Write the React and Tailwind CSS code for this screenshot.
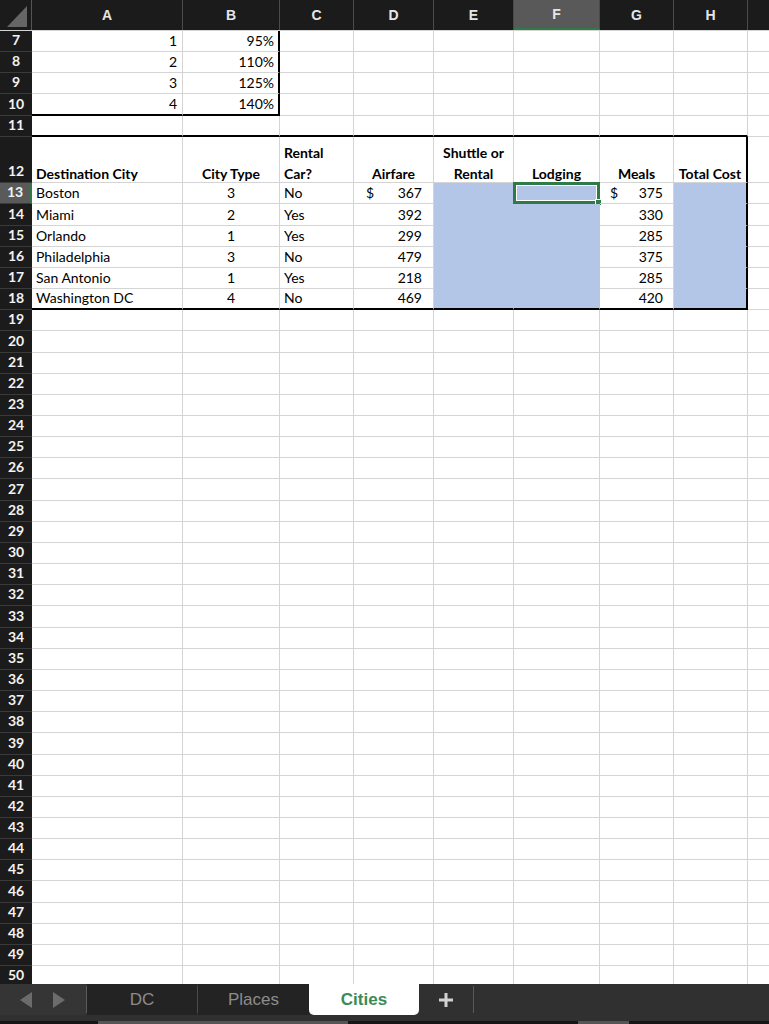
import React from 'react'

const W = ['w-[151px]', 'w-[97px]', 'w-[74px]', 'w-[80px]', 'w-[80px]', 'w-[86px]', 'w-[74px]', 'w-[74px]']
const LETTERS = ['A', 'B', 'C', 'D', 'E', 'F', 'G', 'H']

const RB = {
  g: 'border-r border-r-[#d4d4d4]',
  k: 'border-r-2 border-r-black',
  b: 'border-r border-r-[#b4c6e7]',
}
const BB = {
  g: 'border-b border-b-[#d4d4d4]',
  k: 'border-b-2 border-b-black',
  b: 'border-b border-b-[#b4c6e7]',
}
const AL = {
  l: 'justify-start pl-[4px]',
  r: 'justify-end pr-[4px]',
  c: 'justify-center',
}

const BLUE = 'bg-[#b4c6e7]'

const CITIES = [
  ['Boston', 3, 'No', 367, 375],
  ['Miami', 2, 'Yes', 392, 330],
  ['Orlando', 1, 'Yes', 299, 285],
  ['Philadelphia', 3, 'No', 479, 375],
  ['San Antonio', 1, 'Yes', 218, 285],
  ['Washington DC', 4, 'No', 469, 420],
]

const TIERS = [
  [1, '95%'],
  [2, '110%'],
  [3, '125%'],
  [4, '140%'],
]

function Cell({ i, r = 'g', b = 'g', a = 'l', bg = '', extra = '', children }) {
  return (
    <div className={`${W[i]} shrink-0 relative flex items-end ${RB[r]} ${BB[b]} ${AL[a]} ${bg} ${extra}`}>
      {children}
    </div>
  )
}

function RowHead({ n, sel }) {
  return (
    <div
      className={`w-[32px] shrink-0 flex items-end justify-center pb-[1px] border-b border-b-[#3a3a3a] font-bold text-[#f2f2f2] ${
        sel ? 'bg-[#5a5a5a] border-r-2 border-r-[#2f7a47]' : 'bg-[#1b1b1b]'
      }`}
    >
      {n}
    </div>
  )
}

function Row({ n, h = 'h-[21.16px]', sel, children }) {
  return (
    <div className={`flex ${h}`}>
      <RowHead n={n} sel={sel} />
      {children}
      <div className="flex-1 border-b border-b-[#d4d4d4]" />
    </div>
  )
}

function Blank({ n }) {
  return (
    <Row n={n}>
      {W.map((_, i) => <Cell key={i} i={i} />)}
    </Row>
  )
}

// accounting format: $ sign left, figure right
function Money({ v, dollar, pad }) {
  return (
    <div className={`flex-1 flex justify-between ${pad}`}>
      <span>{dollar ? '$' : ''}</span>
      <span>{v}</span>
    </div>
  )
}

function Selection() {
  return (
    <div className="absolute -left-[1px] -top-[1px] -right-[1px] -bottom-[1px] border-[3px] border-[#2f7a47] shadow-[inset_0_0_0_1px_#ffffff]">
      <div className="absolute -right-[5px] -bottom-[5px] w-[7px] h-[7px] bg-[#2f7a47] border border-white" />
    </div>
  )
}

function TabBar() {
  return (
    <div className="h-[40px] shrink-0 flex flex-col bg-[#303030] font-['Liberation_Sans',Arial,sans-serif]">
      <div className="flex h-[31px]">
        <div className="w-[86px] flex items-center bg-[#353535]">
          <svg width="86" height="31" viewBox="0 0 86 31">
            <polygon points="32,8 32,24 20,16" fill="#6c6c6c" />
            <polygon points="53,8 53,24 65,16" fill="#6c6c6c" />
          </svg>
        </div>
        <div className="w-[1px] my-[2px] bg-[#5a5a5a]" />
        <div className="w-[110px] flex items-center justify-center bg-[#232323] text-[17px] text-[#8c8c8c]">DC</div>
        <div className="w-[1px] my-[2px] bg-[#4a4a4a]" />
        <div className="w-[111px] flex items-center justify-center bg-[#232323] text-[17px] text-[#8c8c8c]">Places</div>
        <div className="w-[110px] flex items-center justify-center bg-white rounded-b-[5px] text-[17px] font-bold text-[#3a8a57]">
          Cities
        </div>
        <div className="w-[54px] flex items-center justify-center">
          <svg width="16" height="16" viewBox="0 0 16 16">
            <path d="M8 1v14M1 8h14" stroke="#d2d2d2" strokeWidth="3" />
          </svg>
        </div>
        <div className="w-[1px] my-[2px] bg-[#5a5a5a]" />
        <div className="flex-1" />
      </div>
      <div className="flex-1" />
      <div className="h-[3px] flex bg-[#161616]">
        <div className="w-[98px]" />
        <div className="w-[250px] bg-[#555555]" />
        <div className="w-[230px]" />
        <div className="w-[51px] bg-[#555555]" />
      </div>
    </div>
  )
}

export default function App() {
  const blanks = []
  for (let n = 19; n <= 50; n++) blanks.push(<Blank key={n} n={n} />)

  return (
    <div className="w-[769px] h-[1024px] flex flex-col overflow-hidden bg-white font-['Lato','Open_Sans',sans-serif] text-[14px] text-black">
      <div className="flex-1 overflow-hidden">
        {/* column headers */}
        <div className="flex h-[31px] bg-[#1b1b1b] border-b border-b-[#d4d4d4] font-['Liberation_Sans',Arial,sans-serif] text-[14px] font-bold text-[#e6e6e6]">
          <div className="w-[32px] shrink-0 border-r border-r-[#555555]">
            <svg width="31" height="30" viewBox="0 0 31 30">
              <polygon points="7,27 27,27 27,6" fill="#666666" />
            </svg>
          </div>
          {LETTERS.map((l, i) => (
            <div
              key={l}
              className={`${W[i]} shrink-0 flex items-center justify-center border-r border-r-[#4a4a4a] ${
                l === 'F' ? 'bg-[#595959] border-b-2 border-b-[#2f7a47]' : ''
              }`}
            >
              {l}
            </div>
          ))}
          <div className="flex-1" />
        </div>

        {TIERS.map(([k, p], idx) => (
          <Row key={k} n={7 + idx}>
            <Cell i={0} a="r" b={idx === 3 ? 'k' : 'g'} extra="pr-[5px]">{k}</Cell>
            <Cell i={1} a="r" r="k" b={idx === 3 ? 'k' : 'g'}>{p}</Cell>
            {[2, 3, 4, 5, 6, 7].map(i => <Cell key={i} i={i} />)}
          </Row>
        ))}

        <Row n={11}>
          {W.map((_, i) => <Cell key={i} i={i} b="k" />)}
        </Row>

        <Row n={12} h="h-[46.5px]">
          <Cell i={0} extra="font-bold"><span className="leading-[21px] -mb-[2px]">Destination City</span></Cell>
          <Cell i={1} a="c" extra="font-bold"><span className="leading-[21px] -mb-[2px]">City Type</span></Cell>
          <Cell i={2} extra="font-bold">
            <span className="leading-[21px] -mb-[2px]">Rental<br />Car?</span>
          </Cell>
          <Cell i={3} a="c" extra="font-bold"><span className="leading-[21px] -mb-[2px]">Airfare</span></Cell>
          <Cell i={4} a="c" extra="font-bold text-center">
            <span className="leading-[21px] -mb-[2px]">Shuttle or<br />Rental</span>
          </Cell>
          <Cell i={5} a="c" extra="font-bold"><span className="leading-[21px] -mb-[2px]">Lodging</span></Cell>
          <Cell i={6} a="c" extra="font-bold"><span className="leading-[21px] -mb-[2px]">Meals</span></Cell>
          <Cell i={7} a="c" r="k" extra="font-bold"><span className="leading-[21px] -mb-[2px]">Total Cost</span></Cell>
        </Row>

        {CITIES.map(([city, type, car, air, meals], idx) => {
          const last = idx === CITIES.length - 1
          const bot = last ? 'k' : 'g'
          const blueBot = last ? 'k' : 'b'
          return (
            <Row key={city} n={13 + idx} sel={idx === 0}>
              <Cell i={0} b={bot}>{city}</Cell>
              <Cell i={1} a="c" b={bot}>{type}</Cell>
              <Cell i={2} b={bot}>{car}</Cell>
              <Cell i={3} b={bot}><Money v={air} dollar={idx === 0} pad="pl-[8px] pr-[11px]" /></Cell>
              <Cell i={4} r="b" b={blueBot} bg={BLUE} />
              <Cell i={5} r="b" b={blueBot} bg={BLUE}>{idx === 0 && <Selection />}</Cell>
              <Cell i={6} b={bot}><Money v={meals} dollar={idx === 0} pad="pl-[6px] pr-[10px]" /></Cell>
              <Cell i={7} r="k" b={blueBot} bg={BLUE} />
            </Row>
          )
        })}

        {blanks}
      </div>
      <TabBar />
    </div>
  )
}
